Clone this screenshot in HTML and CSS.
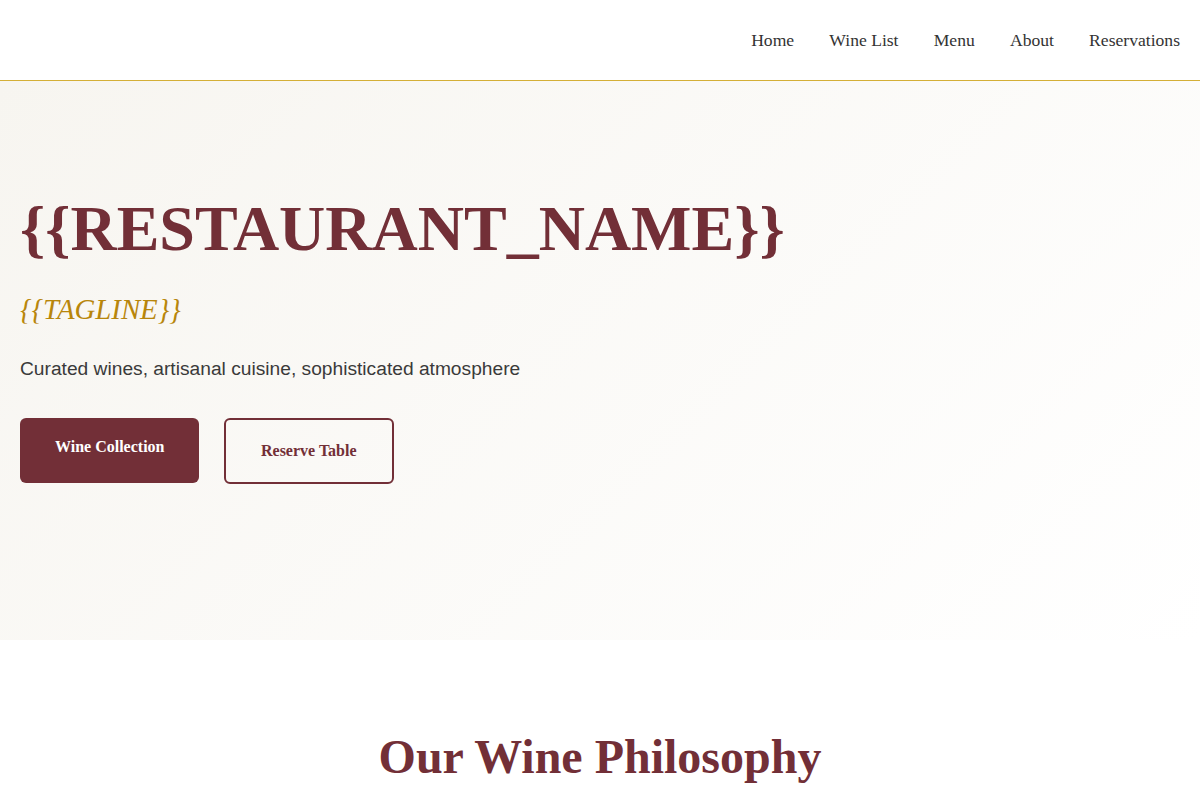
FILE: index.html
```html
<!DOCTYPE html>
<html lang="en">
<head>
<meta charset="utf-8">
<title>{{RESTAURANT_NAME}}</title>
<link rel="stylesheet" href="styles.css">
</head>
<body>
<header class="site-header">
  <div class="logo"></div>
  <nav class="nav">
    <a href="#" class="nav-link">Home</a>
    <a href="#" class="nav-link">Wine List</a>
    <a href="#" class="nav-link">Menu</a>
    <a href="#" class="nav-link">About</a>
    <a href="#" class="nav-link">Reservations</a>
  </nav>
</header>
<section class="hero">
  <h1 class="hero-title">{{RESTAURANT_NAME}}</h1>
  <p class="hero-tagline">{{TAGLINE}}</p>
  <p class="hero-desc">Curated wines, artisanal cuisine, sophisticated atmosphere</p>
  <div class="hero-actions">
    <a href="#" class="btn btn-primary">Wine Collection</a>
    <a href="#" class="btn btn-outline">Reserve Table</a>
  </div>
</section>
<section class="philosophy">
  <h2 class="section-title">Our Wine Philosophy</h2>
</section>
</body>
</html>
```
FILE: styles.css
```css
* { box-sizing: border-box; }
html, body { margin: 0; padding: 0; }
body {
  font-family: "Liberation Serif", "Times New Roman", serif;
  color: #333;
  background: #fff;
}
.site-header {
  height: 81px;
  display: flex;
  align-items: center;
  justify-content: space-between;
  padding: 0 20px;
  background: #fff;
  border-bottom: 1px solid #d4af37;
}
.nav {
  display: flex;
  gap: 35.2px;
}
.nav-link {
  font-size: 17.6px;
  color: #333;
  text-decoration: none;
}
.hero {
  height: 559px;
  padding: 110px 20px 0;
  background: linear-gradient(135deg, #f7f5f0 0%, #ffffff 100%);
}
.hero-title {
  margin: 0;
  font-size: 64px;
  line-height: 1.2;
  font-weight: 700;
  color: #722f37;
}
.hero-tagline {
  margin: 24px 0 0;
  font-size: 28.8px;
  line-height: 1.2;
  font-style: italic;
  color: #b8860b;
}
.hero-desc {
  margin: 28px 0 0;
  font-family: "Liberation Sans", Arial, sans-serif;
  font-size: 19.2px;
  line-height: 1.6;
  color: #3a3a3a;
}
.hero-actions {
  display: flex;
  align-items: flex-start;
  gap: 24.5px;
  margin-top: 33px;
}
.btn {
  display: inline-block;
  font-size: 16px;
  line-height: 20px;
  font-weight: 700;
  text-decoration: none;
  border-radius: 6px;
}
.btn-primary {
  padding: 19px 35px 26px;
  background: #722f37;
  color: #fff;
}
.btn-outline {
  padding: 21px 35px;
  border: 2px solid #722f37;
  color: #722f37;
  background: transparent;
}
.philosophy {
  padding: 88px 20px 40px;
  background: #fff;
  text-align: center;
}
.section-title {
  margin: 0;
  font-size: 48px;
  line-height: 1.2;
  font-weight: 700;
  color: #722f37;
}
```
